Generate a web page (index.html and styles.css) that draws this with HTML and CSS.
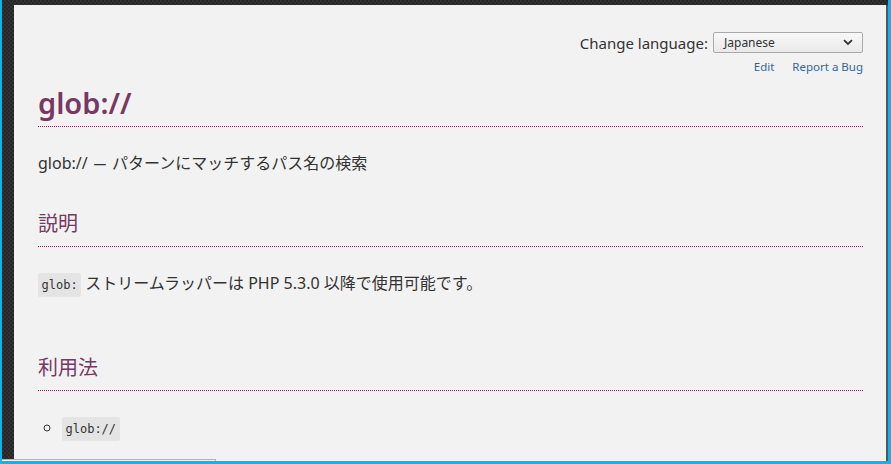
FILE: index.html
```
<!DOCTYPE html>
<html lang="ja">
<head>
<meta charset="utf-8">
<title>glob://</title>
<link rel="stylesheet" href="styles.css">
</head>
<body>
<div class="shell">
  <div class="rail"></div>
  <main class="page">
    <div class="lang-row">
      <label class="lang-label">Change language:</label>
      <div class="select">
        <span>Japanese</span>
        <svg class="chev" width="10" height="7" viewBox="0 0 10 7"><path d="M1 1.2 L5 5 L9 1.2" fill="none" stroke="#333" stroke-width="1.8"/></svg>
      </div>
    </div>
    <div class="links">
      <a href="#">Edit</a>
      <a href="#">Report a Bug</a>
    </div>
    <h1 class="title">glob://</h1>
    <p class="lead">glob:// <span class="dash">—</span> パターンにマッチするパス名の検索</p>
    <h2 class="sect first">説明</h2>
    <p class="text"><code class="code">glob:</code> ストリームラッパーは PHP 5.3.0 以降で使用可能です。</p>
    <h2 class="sect second">利用法</h2>
    <ul class="usage">
      <li><code class="code">glob://</code></li>
    </ul>
  </main>
</div>
<div class="peek"></div>
</body>
</html>
```
FILE: styles.css
```
html, body {
  margin: 0;
  height: 100%;
}
body {
  box-sizing: border-box;
  height: 464px;
  overflow: hidden;
  border-left: 2px solid #0cb4f0;
  border-right: 3px solid #0cb4f0;
  border-bottom: 3px solid #0cb4f0;
  background: #2b2b2b;
  font-family: "Noto Sans", "Noto Sans CJK JP", sans-serif;
  color: #333;
  position: relative;
}
.shell {
  display: flex;
  height: 100%;
  padding-top: 5px;
  box-sizing: border-box;
  background-color: #2a2a2a;
  background-image: repeating-conic-gradient(#333 0 25%, #262626 0 50%);
  background-size: 4px 4px;
}
.rail {
  width: 12px;
  flex: none;
}
.page {
  flex: 1;
  background: #f2f2f2;
  border-right: 2px solid #575757;
  padding: 27px 23px 0 24px;
  overflow: hidden;
}
.lang-row {
  display: flex;
  justify-content: flex-end;
  align-items: center;
  gap: 5px;
  height: 21px;
}
.lang-label {
  font-size: 15px;
  color: #333;
}
.select {
  box-sizing: border-box;
  width: 150px;
  height: 21px;
  border: 1px solid #a9a9a9;
  border-radius: 2px;
  background: linear-gradient(#f8f8f8, #e9e9e9);
  display: flex;
  align-items: center;
  justify-content: space-between;
  padding: 0 9px 0 10px;
  font-size: 12px;
  color: #333;
}
.links {
  display: flex;
  justify-content: flex-end;
  gap: 18px;
  margin-top: 5px;
  font-size: 11.5px;
  line-height: 18px;
}
.links a {
  color: #336699;
  text-decoration: none;
}
.title, .sect {
  color: #793862;
  background-image: linear-gradient(to right, #8e2373 50%, transparent 50%);
  background-size: 2px 1px;
  background-repeat: repeat-x;
  background-position: left bottom;
}
.title {
  margin: 9px 0 0;
  font-size: 29px;
  line-height: 36px;
  height: 36px;
  font-weight: 600;
  padding-bottom: 6px;
}
.lead, .text {
  margin: 24px 0 0;
  font-size: 16px;
  line-height: 24px;
  height: 24px;
}
.dash {
  display: inline-block;
  transform: scaleX(0.8);
}
.sect {
  margin: 35px 0 0;
  font-size: 20px;
  line-height: 28px;
  height: 28px;
  font-weight: 400;
  padding-bottom: 9px;
}
.sect.second {
  margin-top: 59px;
}
.code {
  font-family: "DejaVu Sans Mono", monospace;
  font-size: 12px;
  background: #e4e4e4;
  border-radius: 2px;
  padding: 5px 3.5px;
  color: #333;
}
.usage {
  margin: 24px 0 0;
  padding-left: 24px;
  list-style: circle;
  font-size: 16px;
  line-height: 24px;
}
.usage li {
  height: 24px;
}
.peek {
  position: absolute;
  left: 0;
  top: 459px;
  width: 213px;
  height: 5px;
  border-top: 1px solid #b5b5b5;
  border-right: 1px solid #b5b5b5;
  background: #f0f0f0;
}
```
